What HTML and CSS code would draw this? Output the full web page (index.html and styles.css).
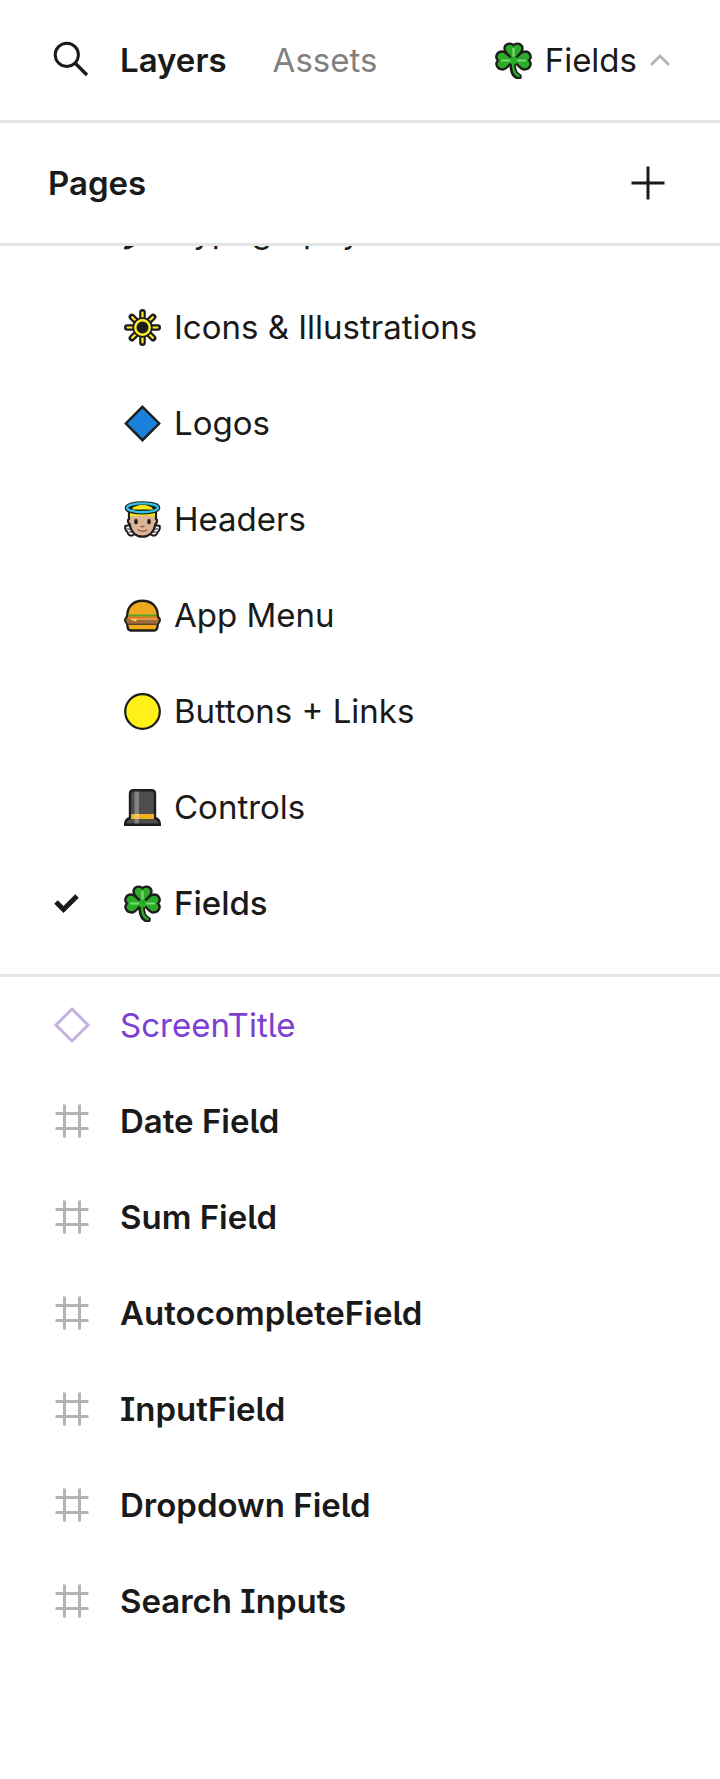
FILE: index.html
```html
<!DOCTYPE html>
<html lang="en">
<head>
    <meta charset="UTF-8">
    <meta name="viewport" content="width=device-width, initial-scale=1.0">
    <title>Layers</title>
    <link rel="stylesheet" href="styles.css">
</head>
<body>
    <!-- shared symbols -->
    <svg class="symbols" aria-hidden="true">
        <symbol id="clover" viewBox="0 0 37 37">
            <path d="M17.500 19c0 9 1 14 6 15.500" fill="none" stroke="#1d1d1b" stroke-width="6.500" stroke-linecap="round"/>
            <g fill="#2bab27" stroke="#1d1d1b" stroke-width="2.400" stroke-linejoin="round">
                <path d="M18.500 18.500C13 13 9.500 10.500 9.500 6.500c0-4.500 6-6.500 9-3.200 3-3.300 9-1.300 9 3.200 0 4-3.500 6.500-9 12z"/>
                <path d="M18.500 18.500C13 24 11.500 27.500 7.500 27.500c-5 0-8-5.500-4.500-9-3.500-3.500-1-9 4-9 4 0 6.500 4 11.500 9z"/>
                <path d="M18.500 18.500C24 24 25.500 27.500 29.500 27.500c5 0 8-5.500 4.500-9 3.500-3.500 1-9-4-9-4 0-6.500 4-11.500 9z"/>
            </g>
            <path d="M18 19c-.500 9 1 13.500 5.500 15" stroke="#2bab27" stroke-width="2.400" fill="none" stroke-linecap="round"/>
            <circle cx="18.500" cy="18.500" r="4" fill="#2bab27"/>
            <path d="M18.500 6v8.500M6 18.500h9M22 18.500h9" stroke="#7bdc76" stroke-width="2.200" fill="none"/>
        </symbol>
        <symbol id="frame" viewBox="0 0 48 48">
            <path d="M16.500 7.500v33M31.500 7.500v33M7.500 16.500h33M7.500 31.500h33" fill="none" stroke="#b3b3b3" stroke-width="3"/>
        </symbol>
    </svg>

    <header class="toolbar">
        <button class="search" type="button" aria-label="Search">
            <svg class="icon" viewBox="0 0 48 48">
                <circle cx="18.800" cy="18.800" r="11.600" fill="none" stroke="#1a1a1a" stroke-width="3"/>
                <path d="M27 27l12 12" stroke="#1a1a1a" stroke-width="3.400"/>
            </svg>
        </button>
        <button class="tab active" type="button">Layers</button>
        <button class="tab" type="button">Assets</button>
        <button class="page-toggle" type="button" aria-expanded="true">
            <svg class="emoji" aria-hidden="true"><use href="#clover"/></svg>
            <span>Fields</span>
            <svg class="chevron" viewBox="0 0 20 14"><path d="M1 12l9-9 9 9" fill="none" stroke="#b3b3b3" stroke-width="2.800"/></svg>
        </button>
    </header>

    <section class="pages">
        <div class="pages-header">
            <h2>Pages</h2>
            <button class="add" type="button" aria-label="Add page">
                <svg class="icon" viewBox="0 0 48 48"><path d="M24 7.500v33M7.500 24h33" stroke="#1a1a1a" stroke-width="3"/></svg>
            </button>
        </div>
        <div class="pages-scroll">
            <ul class="page-list">
                <li>
                    <button class="row" type="button">
                        <svg class="emoji" viewBox="0 0 37 37"><path d="M2 34L6 23 28 2l7 7-22 21z" fill="#4d4d4d" stroke="#1d1d1b" stroke-width="2.400"/><path d="M1.500 35c4 0 6-2 9-4" fill="none" stroke="#1d1d1b" stroke-width="3" stroke-linecap="round"/></svg>
                        <span>Typography</span>
                    </button>
                </li>
                <li>
                    <button class="row" type="button">
                        <svg class="emoji" viewBox="0 0 37 37">
                            <g fill="none" stroke-linecap="round">
                                <path d="M18.500 3.300v30.400M3.300 18.500h30.400M7.900 7.900l21.200 21.200M29.100 7.900L7.900 29.100" stroke="#1d1d1b" stroke-width="6.600"/>
                                <path d="M18.500 3.600v29.800M3.600 18.500h29.800M8.200 8.200l20.600 20.600M28.800 8.200L8.200 28.800" stroke="#fff02a" stroke-width="2.200"/>
                            </g>
                            <circle cx="18.500" cy="18.500" r="10.200" fill="#1d1d1b"/>
                            <circle cx="18.500" cy="18.500" r="7.200" fill="#1d1d1b" stroke="#fff02a" stroke-width="2.400"/>
                        </svg>
                        <span>Icons &amp; Illustrations</span>
                    </button>
                </li>
                <li>
                    <button class="row" type="button">
                        <svg class="emoji" viewBox="0 0 37 37"><path d="M18.500 1.800L35.200 18.500 18.500 35.200 1.800 18.500z" fill="#1a82dc" stroke="#1d1d1b" stroke-width="2.400"/></svg>
                        <span>Logos</span>
                    </button>
                </li>
                <li>
                    <button class="row" type="button">
                        <svg class="emoji" viewBox="0 0 37 37">
                            <path d="M6 24L1.300 25c-.500 3 .500 5 2.200 6 0 2.500 2.500 4 5 3.500l3-2zM31 24l4.700 1c.500 3-.500 5-2.200 6 0 2.500-2.500 4-5 3.500l-3-2z" fill="#fff" stroke="#1d1d1b" stroke-width="2" stroke-linejoin="round"/>
                            <path d="M3 28h5M5 31h5M34 28h-5M32 31h-5" stroke="#1d1d1b" stroke-width="1.200"/>
                            <path d="M5 10v8c-2 1-1 4 .500 5C7 31 12 35.700 18.500 35.700S30 31 31.500 23c1.500-1 2.500-4 .500-5v-8z" fill="#dcb49a" stroke="#1d1d1b" stroke-width="2.200"/>
                            <path d="M6 16V8c4-4.500 21-4.500 25 0v8l-3-1.500-3 1-3-1.500-3.500 1.500-3.500-1.500-3 1.500-3-1z" fill="#f5e70f"/>
                            <ellipse cx="18.500" cy="6.800" rx="15" ry="3.800" fill="none" stroke="#1d1d1b" stroke-width="5.600"/>
                            <path d="M8 8.500c2-6 19-6 21 0z" fill="#f5e70f"/>
                            <ellipse cx="18.500" cy="6.800" rx="15.400" ry="4.400" fill="none" stroke="#35bfe0" stroke-width="2.400"/>
                            <ellipse cx="12" cy="20.500" rx="1.800" ry="2.800" fill="#1d1d1b"/>
                            <ellipse cx="25" cy="20.500" rx="1.800" ry="2.800" fill="#1d1d1b"/>
                            <path d="M16.500 25.200c1.500.800 2.500.800 4 0M14 28.500c2 2.400 7 2.400 9 0" fill="none" stroke="#9a6545" stroke-width="1.500"/>
                        </svg>
                        <span>Headers</span>
                    </button>
                </li>
                <li>
                    <button class="row" type="button">
                        <svg class="emoji" viewBox="0 0 37 37">
                            <path d="M3.200 19C3.200 9 10 3.700 18.500 3.700S33.800 9 33.800 19c0 1.500 2 2 2 4 0 2.500-2.200 3-2.200 5 0 4-1.200 5.500-3.600 5.500H7c-2.400 0-3.600-1.500-3.600-5.500 0-2-2.200-2.500-2.200-5 0-2 2-2.500 2-4z" fill="#f0a81f" stroke="#1d1d1b" stroke-width="2.400" stroke-linejoin="round"/>
                            <path d="M2.500 22h32v3.500l-2 1.500h-28l-2-1.500z" fill="#a06a3c"/>
                            <path d="M4 20.500h29" stroke="#e2722c" stroke-width="2"/>
                            <path d="M4.500 18.500h28" stroke="#46a82a" stroke-width="1.800"/>
                            <path d="M7 22.500h6M10 23.500h2" stroke="#ffd44d" stroke-width="1.600"/>
                            <path d="M13 22.200h20" stroke="#f0b060" stroke-width="1"/>
                            <path d="M4.500 27.300h28" stroke="#4d3322" stroke-width="1.200"/>
                        </svg>
                        <span>App Menu</span>
                    </button>
                </li>
                <li>
                    <button class="row" type="button">
                        <svg class="emoji" viewBox="0 0 37 37"><circle cx="18.500" cy="18.500" r="17.300" fill="#fff01a" stroke="#1d1d1b" stroke-width="2.200"/></svg>
                        <span>Buttons + Links</span>
                    </button>
                </li>
                <li>
                    <button class="row" type="button">
                        <svg class="emoji" viewBox="0 0 37 37">
                            <path d="M6 29V4.500C6 2.300 7.500 1.200 9.500 1.200h18c2 0 3.500 1.100 3.500 3.300V29c3 .800 4.800 3 4.800 6.800H1.200C1.200 32 3 29.800 6 29z" fill="#4d4d4d" stroke="#1d1d1b" stroke-width="2.400"/>
                            <path d="M7 25h23v5H7z" fill="#f2b01e"/>
                            <path d="M10.500 2.500H15v32h-4.500z" fill="#fff" opacity=".3"/>
                        </svg>
                        <span>Controls</span>
                    </button>
                </li>
                <li>
                    <button class="row current" type="button" aria-current="page">
                        <svg class="icon check" viewBox="0 0 48 48"><path d="M8 23l7.500 7.500L29 17" fill="none" stroke="#1a1a1a" stroke-width="5"/></svg>
                        <svg class="emoji"><use href="#clover"/></svg>
                        <span>Fields</span>
                    </button>
                </li>
            </ul>
        </div>
    </section>

    <main>
        <ul class="layer-list">
            <li>
                <button class="layer component" type="button">
                    <svg class="icon" viewBox="0 0 48 48"><path d="M24 8l16 16-16 16L8 24z" fill="none" stroke="#c3b1e0" stroke-width="3"/></svg>
                    <span>ScreenTitle</span>
                </button>
            </li>
            <li>
                <button class="layer" type="button"><svg class="icon"><use href="#frame"/></svg><span>Date Field</span></button>
            </li>
            <li>
                <button class="layer" type="button"><svg class="icon"><use href="#frame"/></svg><span>Sum Field</span></button>
            </li>
            <li>
                <button class="layer" type="button"><svg class="icon"><use href="#frame"/></svg><span>AutocompleteField</span></button>
            </li>
            <li>
                <button class="layer" type="button"><svg class="icon"><use href="#frame"/></svg><span>InputField</span></button>
            </li>
            <li>
                <button class="layer" type="button"><svg class="icon"><use href="#frame"/></svg><span>Dropdown Field</span></button>
            </li>
            <li>
                <button class="layer" type="button"><svg class="icon"><use href="#frame"/></svg><span>Search Inputs</span></button>
            </li>
        </ul>
    </main>
</body>
</html>
```
FILE: styles.css
```css
* {
    box-sizing: border-box;
}

body {
    font-family: Inter, sans-serif;
    font-size: 33px;
    line-height: 48px;
    margin: 0;
    background-color: #fff;
    color: #1a1a1a;
}

button {
    font: inherit;
    color: inherit;
    background: none;
    border: 0;
    padding: 0;
    cursor: pointer;
}

ul {
    list-style: none;
    margin: 0;
    padding: 0;
}

svg {
    display: block;
    flex-shrink: 0;
}

.symbols {
    display: none;
}

.icon {
    width: 48px;
    height: 48px;
}

.emoji {
    width: 37px;
    height: 37px;
}

/* top bar */
.toolbar {
    display: flex;
    align-items: center;
    height: 123px;
    padding: 0 50px 0 48px;
    border-bottom: 3px solid #e5e5e5;
}

.search {
    margin-right: 24px;
}

.tab {
    margin-right: 46px;
    color: #808080;
}

.tab.active {
    font-weight: 600;
    color: #1a1a1a;
}

.page-toggle {
    display: flex;
    align-items: center;
    gap: 13px;
    margin-left: auto;
}

.chevron {
    width: 20px;
    height: 14px;
}

/* pages */
.pages {
    border-bottom: 3px solid #e5e5e5;
}

.pages-header {
    display: flex;
    align-items: center;
    justify-content: space-between;
    height: 123px;
    padding: 0 48px;
    border-bottom: 3px solid #e5e5e5;
}

.pages-header h2 {
    margin: 0;
    font-size: 33px;
    font-weight: 600;
}

.pages-scroll {
    overflow: hidden;
    padding-bottom: 23px;
}

/* list is scrolled down, first row is mostly hidden */
.page-list {
    margin-top: -63px;
}

.row {
    display: flex;
    align-items: center;
    gap: 13px;
    width: 100%;
    height: 96px;
    padding: 0 48px 0 124px;
    text-align: left;
}

.row.current {
    padding-left: 48px;
    font-weight: 500;
}

.check {
    margin-right: 15px;
}

/* layers */
.layer {
    display: flex;
    align-items: center;
    gap: 24px;
    width: 100%;
    height: 96px;
    padding: 0 48px;
    text-align: left;
    font-weight: 600;
    font-feature-settings: "ss02";
}

.layer.component {
    font-weight: 400;
    color: #7b3fd3;
}
```
